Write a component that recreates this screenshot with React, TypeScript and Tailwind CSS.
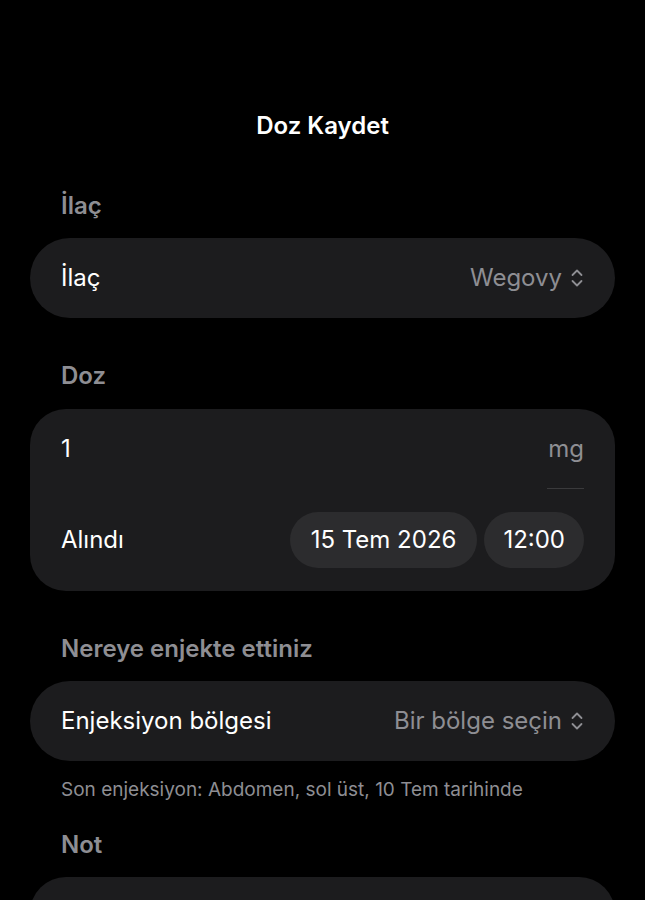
import React from "react";

const FONT = { fontFamily: "Inter, 'Noto Sans', sans-serif" };

function UpDown() {
  return (
    <svg width="14" height="22" viewBox="0 0 14 22" fill="none" className="shrink-0">
      <path d="M2.5 8 L7 3.5 L11.5 8" stroke="#8e8e93" strokeWidth="1.8" strokeLinecap="round" strokeLinejoin="round" />
      <path d="M2.5 14 L7 18.5 L11.5 14" stroke="#8e8e93" strokeWidth="1.8" strokeLinecap="round" strokeLinejoin="round" />
    </svg>
  );
}

function SectionLabel({ children }: { children: React.ReactNode }) {
  return (
    <p className="px-[31px] text-[24px] leading-[30px] font-semibold text-[#8e8e93]">{children}</p>
  );
}

function PickerRow({ label, value }: { label: string; value: string }) {
  return (
    <div className="flex items-center justify-between h-[80px] rounded-full bg-[#1c1c1e] px-[31px]">
      <span className="text-[24px] text-white">{label}</span>
      <span className="flex items-center gap-[8px] text-[24px] text-[#8e8e93]">
        {value}
        <UpDown />
      </span>
    </div>
  );
}

export default function App() {
  return (
    <div className="min-h-[900px] bg-black overflow-hidden px-[30px]" style={FONT}>
      <h1 className="pt-[111px] text-center text-[24px] leading-[30px] font-semibold text-white">Doz Kaydet</h1>

      <div className="mt-[50px]">
        <SectionLabel>İlaç</SectionLabel>
      </div>
      <div className="mt-[17px]">
        <PickerRow label="İlaç" value="Wegovy" />
      </div>

      <div className="mt-[43px]">
        <SectionLabel>Doz</SectionLabel>
      </div>
      <div className="mt-[18px] rounded-[36px] bg-[#1c1c1e] px-[31px] pt-[22px] pb-[23px]">
        <div className="flex items-start justify-between">
          <span className="text-[24px] leading-[36px] text-white">1</span>
          <div className="flex flex-col items-end">
            <span className="text-[24px] leading-[36px] text-[#8e8e93]">mg</span>
            <div className="mt-[21px] h-px w-[37px] bg-[#3a3a3c]" />
          </div>
        </div>
        <div className="mt-[23px] flex items-center justify-between">
          <span className="text-[24px] text-white">Alındı</span>
          <div className="flex gap-[7px]">
            <span className="flex h-[56px] items-center rounded-full bg-[#2c2c2e] px-[21px] text-[24px] text-white">15 Tem 2026</span>
            <span className="flex h-[56px] items-center rounded-full bg-[#2c2c2e] px-[19px] text-[24px] text-white">12:00</span>
          </div>
        </div>
      </div>

      <div className="mt-[43px]">
        <SectionLabel>Nereye enjekte ettiniz</SectionLabel>
      </div>
      <div className="mt-[17px]">
        <PickerRow label="Enjeksiyon bölgesi" value="Bir bölge seçin" />
      </div>
      <p className="mt-[17px] px-[31px] text-[19px] leading-[24px] text-[#8e8e93]">
        Son enjeksiyon: Abdomen, sol üst, 10 Tem tarihinde
      </p>

      <div className="mt-[28px]">
        <SectionLabel>Not</SectionLabel>
      </div>
      <div className="mt-[17px] h-[120px] rounded-[36px] bg-[#1c1c1e]" />
    </div>
  );
}
